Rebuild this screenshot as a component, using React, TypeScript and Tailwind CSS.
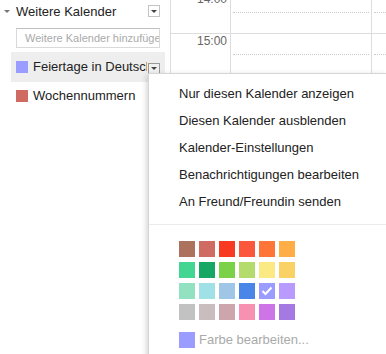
const palette = [
  ["#ac725e", "#d06b64", "#f83a22", "#fa573c", "#ff7537", "#ffad46"],
  ["#42d692", "#16a765", "#7bd148", "#b3dc6c", "#fbe983", "#fad165"],
  ["#92e1c0", "#9fe1e7", "#9fc6e7", "#4986e7", "#9a9cff", "#b99aff"],
  ["#c2c2c2", "#cabdbf", "#cca6ac", "#f691b2", "#cd74e6", "#a47ae2"],
];

const menuItems = [
  "Nur diesen Kalender anzeigen",
  "Diesen Kalender ausblenden",
  "Kalender-Einstellungen",
  "Benachrichtigungen bearbeiten",
  "An Freund/Freundin senden",
];

// only the first two hour labels are visible, the rest sit under the menu
const hours = ["14:00", "15:00", "", "", "", "", "", "", ""];

function DropButton({ active }: { active?: boolean }) {
  return (
    <div
      className={`flex h-[12px] w-[12px] shrink-0 items-center justify-center border ${
        active ? "border-[#999] bg-[#f1f1f1]" : "border-[#c4c4c4] bg-white"
      }`}
    >
      <div className="h-0 w-0 border-x-[3px] border-t-[3px] border-x-transparent border-t-[#444]" />
    </div>
  );
}

export default function App() {
  return (
    <div className="relative flex h-[354px] w-[386px] overflow-hidden bg-white font-['Liberation_Sans',Arial,sans-serif] text-[13px] text-[#222]">
      <aside className="w-[170px] shrink-0">
        <div className="flex h-[22px] items-center pl-[4px] pr-[10px]">
          <div className="h-0 w-0 border-x-[3px] border-t-[3px] border-x-transparent border-t-[#777]" />
          <span className="ml-[6px] flex-1 leading-none">Weitere Kalender</span>
          <DropButton />
        </div>
        <div className="ml-[16px] mt-[6px] flex h-[20px] w-[144px] items-center overflow-hidden whitespace-nowrap border border-[#d9d9d9] border-t-[#c0c0c0] pl-[8px] text-[11px] text-[#aaa]">
          Weitere Kalender hinzufügen
        </div>
        <div className="ml-[11px] mt-[4px] flex h-[30px] w-[154px] items-center bg-[#eee] pl-[5px]">
          <div className="-mt-[1px] h-[12px] w-[12px] shrink-0 bg-[#9a9cff]" />
          <span className="ml-[5px] w-[114px] overflow-hidden whitespace-nowrap">Feiertage in Deutschland</span>
          <div className="ml-[1px] mt-[3px]">
            <DropButton active />
          </div>
        </div>
        <div className="ml-[11px] flex h-[28px] items-center pl-[5px]">
          <div className="h-[12px] w-[12px] shrink-0 bg-[#d06b64]" />
          <span className="ml-[5px]">Wochennummern</span>
        </div>
      </aside>

      <div className="-mt-[9px] flex flex-1 flex-col">
        {hours.map((h, i) => (
          <div key={i} className="flex h-[42px] shrink-0 border-t border-[#ddd]">
            <div className="w-[60px] border-l border-[#ddd] pr-[3px] text-right text-[12px] leading-[14px] text-[#666]">
              {h}
            </div>
            <div className="w-[141px] border-l border-[#ddd] px-[2px]">
              <div className="h-[21px] border-b border-dotted border-[#ccc]" />
            </div>
            <div className="flex-1 border-l border-[#ddd] pl-[2px]">
              <div className="h-[21px] border-b border-dotted border-[#ccc]" />
            </div>
          </div>
        ))}
      </div>

      <div className="absolute left-[148px] right-0 top-[73px] h-[300px] border-l border-t border-[#d6d6d6] bg-white shadow-[-1px_2px_6px_rgba(0,0,0,0.2)]">
        <ul className="pt-[6px]">
          {menuItems.map((item) => (
            <li key={item} className="h-[27px] whitespace-nowrap pl-[30px] leading-[27px]">
              {item}
            </li>
          ))}
        </ul>
        <div className="mt-[9px] h-px bg-[#ebebeb]" />
        <div className="mt-[16px] grid w-max grid-cols-[repeat(6,16px)] gap-x-[4px] gap-y-[5px] pl-[30px]">
          {palette.flat().map((c, i) => (
            <div key={i} className="flex h-[16px] w-[16px] items-center justify-center" style={{ backgroundColor: c }}>
              {c === "#9a9cff" && (
                <svg width="16" height="16" viewBox="0 0 16 16">
                  <path d="M3.5 8 L6.5 11 L12.5 4.5" fill="none" stroke="white" strokeWidth="2" />
                </svg>
              )}
            </div>
          ))}
        </div>
        <div className="mt-[10px] flex items-center pl-[30px]">
          <div className="h-[16px] w-[16px] bg-[#9a9cff]" />
          <span className="ml-[4px] text-[#aaa]">Farbe bearbeiten...</span>
        </div>
      </div>
    </div>
  );
}
